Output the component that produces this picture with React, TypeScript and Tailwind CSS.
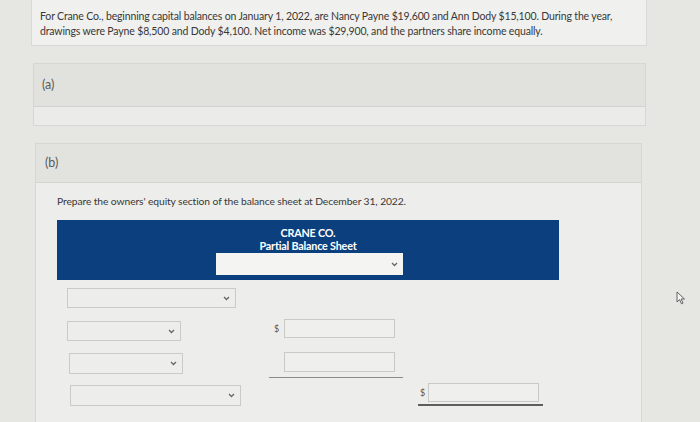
import React from "react";

const Chevron = () => (
  <svg width="7" height="5" viewBox="0 0 7 5" className="shrink-0">
    <path d="M1 1 L3.5 3.5 L6 1" fill="none" stroke="#666" strokeWidth="1.3" />
  </svg>
);

const Select = ({ w, h, mt = 0 }: { w: number; h: number; mt?: number }) => (
  <div
    className="flex items-center justify-end border border-[#cacac7] bg-[#ededeb] pr-[5px]"
    style={{ width: w, height: h, marginTop: mt }}
  >
    <Chevron />
  </div>
);

const Input = ({ h }: { h: number }) => (
  <div className="w-[111px] border border-[#c9c9c6] bg-[#efefed]" style={{ height: h }} />
);

export default function App() {
  return (
    <div
      className="relative w-[700px] h-[422px] overflow-hidden bg-[#e6e6e3] text-[#383838]"
      style={{ fontFamily: "Lato, 'Open Sans', sans-serif" }}
    >
      {/* problem statement */}
      <div className="ml-[31px] w-[616px] h-[46px] border border-t-0 border-[#d9d9d6] bg-[#f0f0ee] pl-[8px] pt-[9px] text-[10.5px] leading-[15px] tracking-[-0.15px]">
        <p>
          For Crane Co., beginning capital balances on January 1, 2022, are Nancy Payne $19,600 and Ann Dody $15,100. During the year,
        </p>
        <p>drawings were Payne $8,500 and Dody $4,100. Net income was $29,900, and the partners share income equally.</p>
      </div>

      {/* (a) */}
      <div className="mt-[17px] ml-[33px] w-[613px] border border-[#d6d6d3]">
        <div className="h-[42px] bg-[#e1e1de] pl-[8px] flex items-center text-[12.5px] text-[#5a5a5a]">(a)</div>
        <div className="h-[19px] border-t border-[#d2d2cf] bg-[#ebebe9]" />
      </div>

      {/* (b) */}
      <div className="mt-[17px] ml-[35px] w-[607px] h-[300px] border border-[#d6d6d3] bg-[#ededeb]">
        <div className="h-[39px] bg-[#e2e2df] pl-[9px] flex items-center text-[12.5px] text-[#5a5a5a] border-b border-[#d3d3d0]">
          (b)
        </div>
        <div className="pl-[21px]">
          <p className="pt-[11px] text-[10.3px] leading-[15px] tracking-[-0.1px]">
            Prepare the owners&apos; equity section of the balance sheet at December 31, 2022.
          </p>

          {/* blue header */}
          <div className="mt-[11px] w-[502px] h-[60px] bg-[#0b3f7e] flex flex-col items-center pt-[6px]">
            <div className="text-white font-bold text-[10.8px] leading-[13px] tracking-[-0.2px]">CRANE CO.</div>
            <div className="text-white font-bold text-[10.8px] leading-[13px] tracking-[-0.2px]">
              Partial Balance Sheet
            </div>
            <div className="mt-[1px] ml-[3px] w-[187px] h-[22px] bg-[#f4f4f2] flex items-center justify-end pr-[5px]">
              <Chevron />
            </div>
          </div>

          {/* rows */}
          <div className="ml-[10px]">
            {/* row 1 */}
            <div className="mt-[8px] flex">
              <Select w={169} h={20} />
            </div>

            {/* row 2 */}
            <div className="mt-[11px] flex items-start">
              <div className="w-[202px]">
                <Select w={114} h={20} mt={2} />
              </div>
              <div className="w-[134px] flex items-center">
                <span className="w-[15px] pl-[5px] text-[9px] text-[#555]">$</span>
                <Input h={19} />
              </div>
            </div>

            {/* row 3 */}
            <div className="mt-[11px] flex items-start">
              <div className="w-[202px] pl-[2px]">
                <Select w={114} h={21} mt={1} />
              </div>
              <div className="w-[134px]">
                <div className="pl-[15px]">
                  <Input h={20} />
                </div>
                <div className="mt-[5px] h-[1px] bg-[#8c8c8a]" />
              </div>
            </div>

            {/* row 4 */}
            <div className="mt-[5px] flex items-start">
              <div className="w-[202px] pl-[3px]">
                <Select w={171} h={21} mt={2} />
              </div>
              <div className="w-[134px]" />
              <div className="w-[125px] ml-[15px]">
                <div className="flex items-center">
                  <span className="w-[10px] pl-[2px] text-[9px] text-[#555]">$</span>
                  <Input h={19} />
                </div>
                <div className="mt-[2px] h-[2px] bg-[#5e5e5c]" />
              </div>
            </div>
          </div>
        </div>
      </div>

      {/* mouse cursor */}
      <svg className="absolute left-[676px] top-[291px]" width="10" height="14" viewBox="0 0 10 14">
        <path d="M1 1 L1 11 L3.5 8.6 L5.5 12.8 L7 12.1 L5.1 8 L8.5 8 Z" fill="#f4f4f2" stroke="#555" strokeWidth="0.9" strokeLinejoin="round" />
      </svg>
    </div>
  );
}
